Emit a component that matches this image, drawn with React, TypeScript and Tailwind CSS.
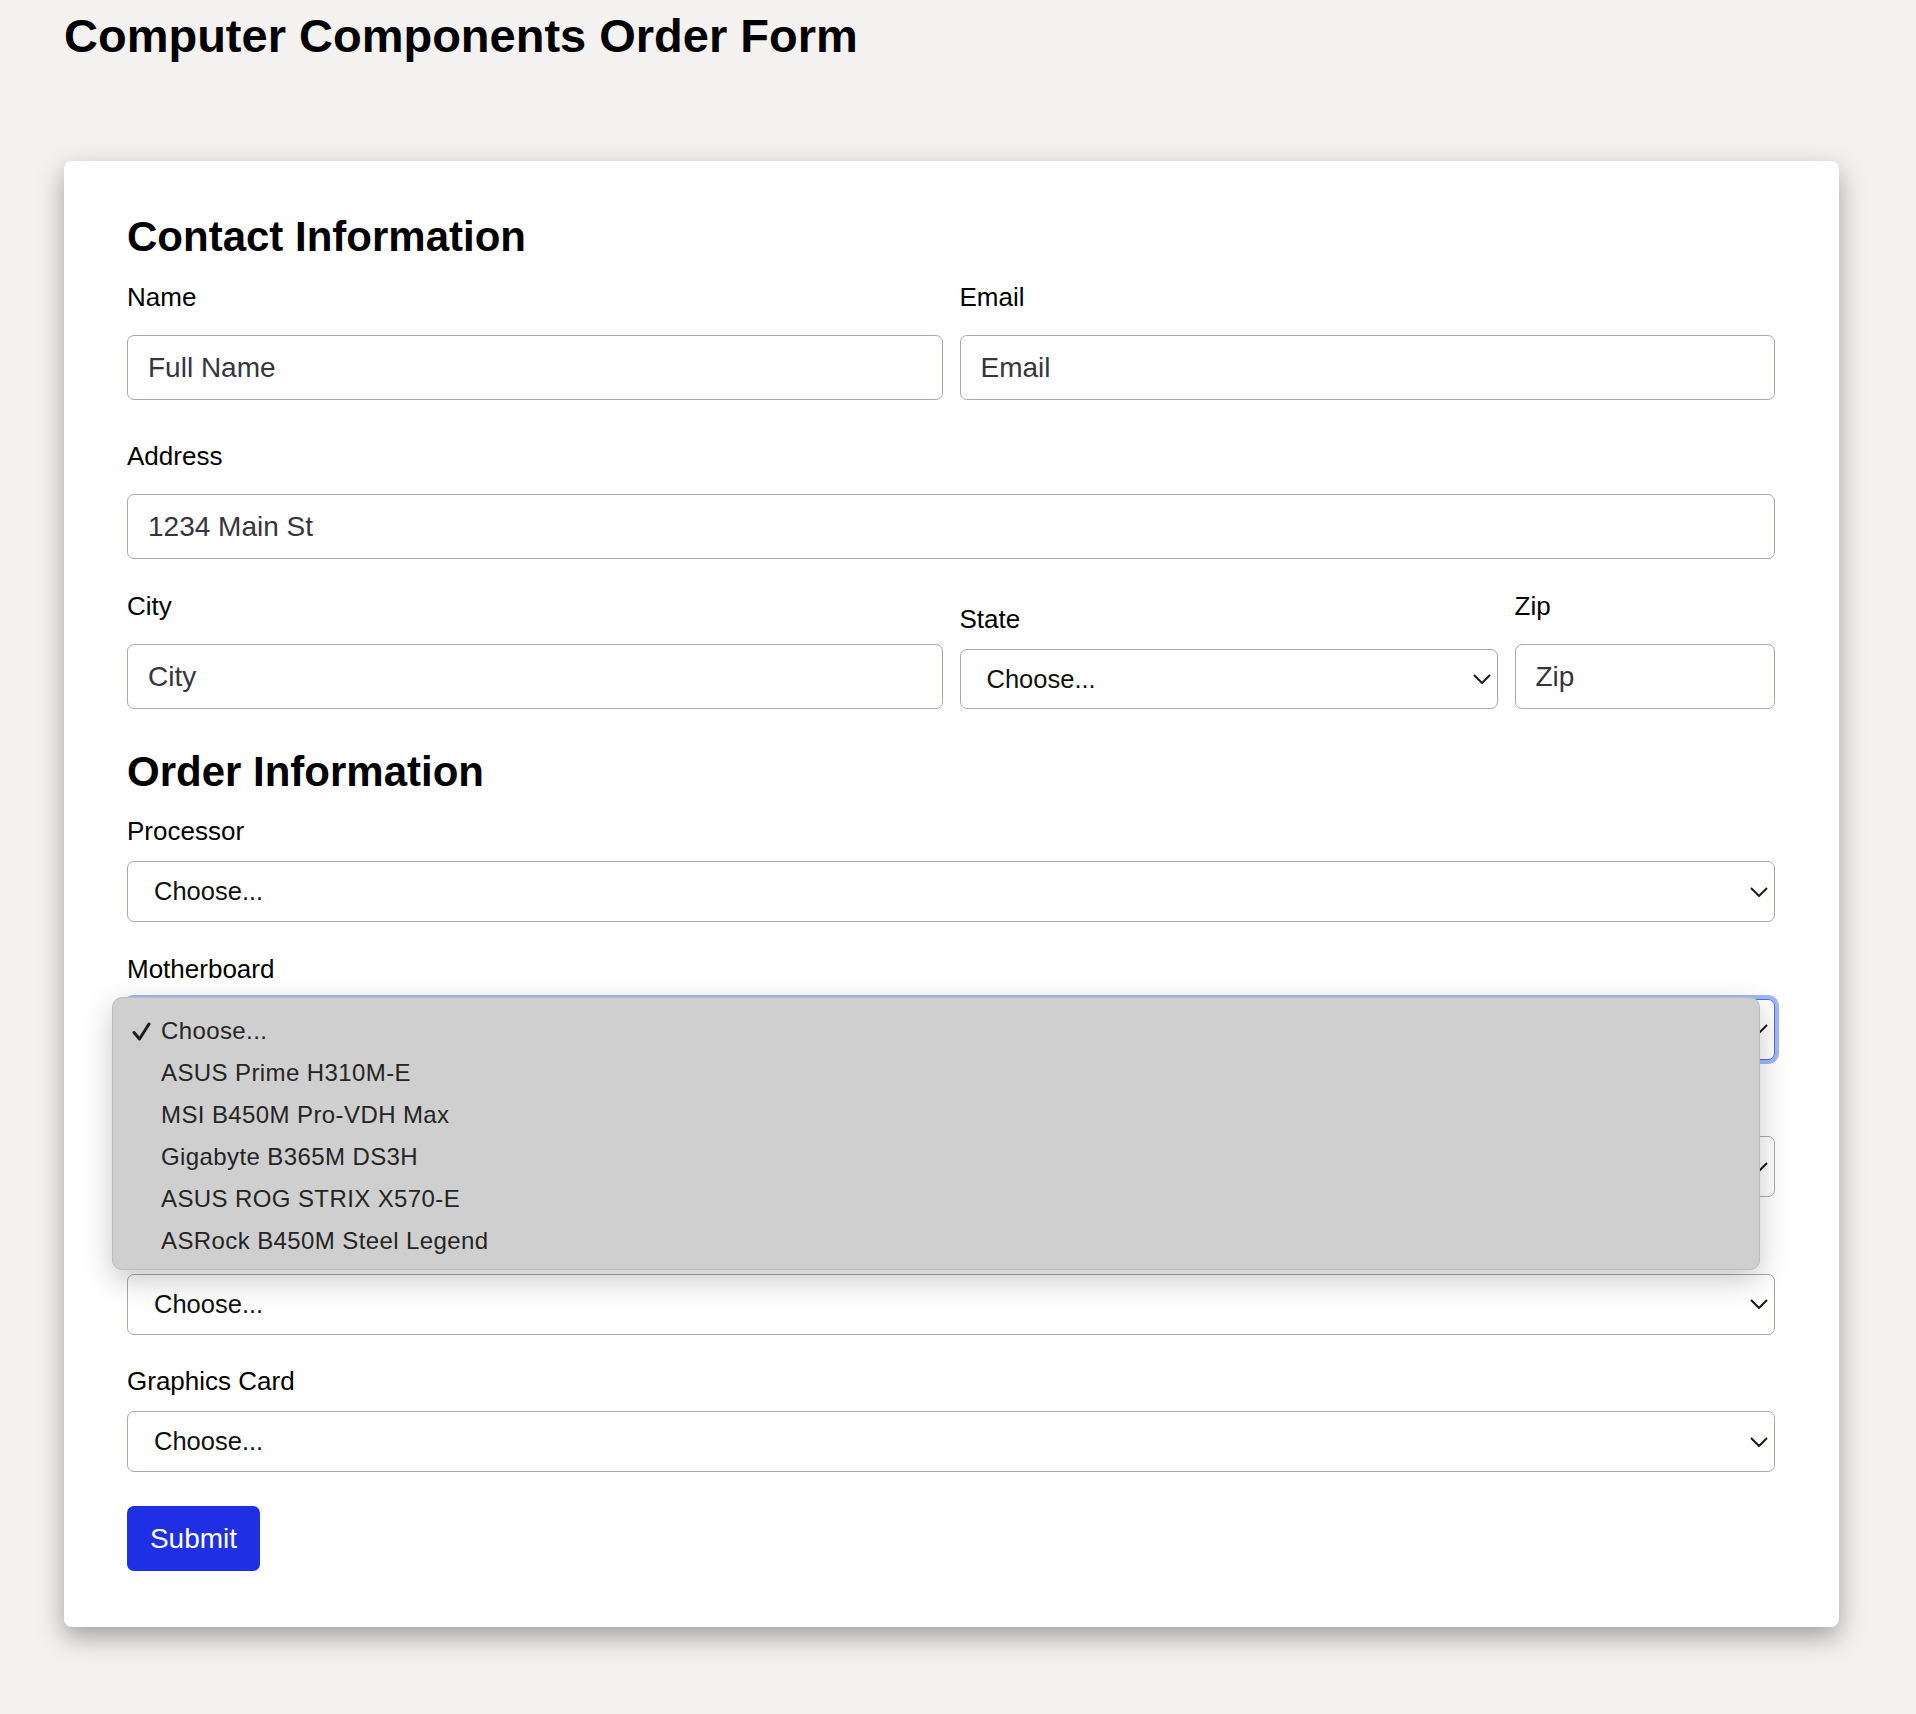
import React from "react";

const motherboards = [
  "Choose...",
  "ASUS Prime H310M-E",
  "MSI B450M Pro-VDH Max",
  "Gigabyte B365M DS3H",
  "ASUS ROG STRIX X570-E",
  "ASRock B450M Steel Legend",
];

function Chevron() {
  return (
    <svg
      className="pointer-events-none absolute right-[7px] top-1/2 h-[10px] w-[18px] -translate-y-1/2"
      viewBox="0 0 18 10"
      fill="none"
    >
      <path d="M1 1l8 8 8-8" stroke="#1a1a1a" strokeWidth="2" />
    </svg>
  );
}

function TextField({
  label,
  placeholder,
  className,
}: {
  label: string;
  placeholder: string;
  className?: string;
}) {
  return (
    <div className={className}>
      <label className="block text-[26px] leading-[38px] text-black">{label}</label>
      <input
        className="mt-[19px] block h-[65px] w-full rounded-[7px] border border-[#a4a8b0] bg-white px-[20px] text-[28px] text-[#35353f] outline-none placeholder:text-[#35353f]"
        placeholder={placeholder}
        type="text"
      />
    </div>
  );
}

function SelectField({
  label,
  className,
  height = "h-[61px]",
  focused,
  children,
}: {
  label: string;
  className?: string;
  height?: string;
  focused?: boolean;
  children?: React.ReactNode;
}) {
  return (
    <div className={className}>
      <label className="block text-[26px] leading-[38px] text-black">{label}</label>
      <div className="relative mt-[11px]">
        <select
          className={[
            "block w-full appearance-none rounded-[7px] border bg-white pl-[26px] pr-[40px] text-[25.5px] text-[#111] outline-none",
            height,
            focused
              ? "border-[#4a6ff0] shadow-[0_0_0_4px_rgba(100,135,240,0.6)]"
              : "border-[#a4a8b0]",
          ].join(" ")}
          defaultValue="Choose..."
        >
          <option>Choose...</option>
        </select>
        <Chevron />
        {children}
      </div>
    </div>
  );
}

function DropdownMenu() {
  return (
    <div className="absolute left-[-15px] top-[-1.5px] z-10 h-[273px] w-[1648px] rounded-[10px] border border-[#bdbdbd] bg-[#cfcfcf] pt-[12px] shadow-[0_10px_30px_rgba(0,0,0,0.22)]">
      {motherboards.map((item, i) => (
        <div
          key={item}
          className="relative h-[42px] pl-[48px] text-[24px] leading-[42px] tracking-[0.4px] text-[#252525]"
        >
          {i === 0 && (
            <svg
              className="absolute left-[19px] top-[12px] h-[19px] w-[19px]"
              viewBox="0 0 19 19"
              fill="none"
            >
              <path
                d="M2 10.5l5.5 6.5L17 2"
                stroke="#1e1e1e"
                strokeWidth="3"
                strokeLinecap="round"
                strokeLinejoin="round"
              />
            </svg>
          )}
          {item}
        </div>
      ))}
    </div>
  );
}

export default function App() {
  return (
    <div className="min-h-[1714px] bg-[#f3f2f1] pl-[64px] pr-[77px] pt-[8px] font-['Liberation_Sans',Arial,sans-serif] text-black">
      <h1 className="text-[47px] font-bold leading-[56px]">Computer Components Order Form</h1>

      <div className="mt-[97px] rounded-[8px] bg-white pb-[56px] pl-[63px] pr-[64px] pt-[52px] shadow-[0_10px_26px_rgba(0,0,0,0.34)]">
        <form
          onSubmit={(e) => {
            e.preventDefault();
          }}
        >
          <h2 className="text-[42px] font-bold leading-[48px]">Contact Information</h2>

          <div className="mt-[17px] grid grid-cols-2 gap-x-[17px]">
            <TextField label="Name" placeholder="Full Name" />
            <TextField label="Email" placeholder="Email" />
          </div>

          <TextField className="mt-[37px]" label="Address" placeholder="1234 Main St" />

          <div className="mt-[28px] grid grid-cols-6 items-end gap-x-[17px]">
            <TextField className="col-span-3" label="City" placeholder="City" />
            <SelectField className="col-span-2" label="State" height="h-[60px]" />
            <TextField className="col-span-1" label="Zip" placeholder="Zip" />
          </div>

          <h2 className="mt-[39px] text-[42px] font-bold leading-[48px]">Order Information</h2>

          <SelectField className="mt-[16px]" label="Processor" />
          <SelectField className="mt-[27.5px]" label="Motherboard" focused>
            <DropdownMenu />
          </SelectField>
          <SelectField className="mt-[27.5px]" label="Memory" />
          <SelectField className="mt-[27.5px]" label="Storage" />
          <SelectField className="mt-[27.5px]" label="Graphics Card" />

          <button
            type="submit"
            className="mt-[34px] h-[65px] w-[133px] rounded-[7px] bg-[#1e2fe4] text-[28px] text-white"
          >
            Submit
          </button>
        </form>
      </div>
    </div>
  );
}
